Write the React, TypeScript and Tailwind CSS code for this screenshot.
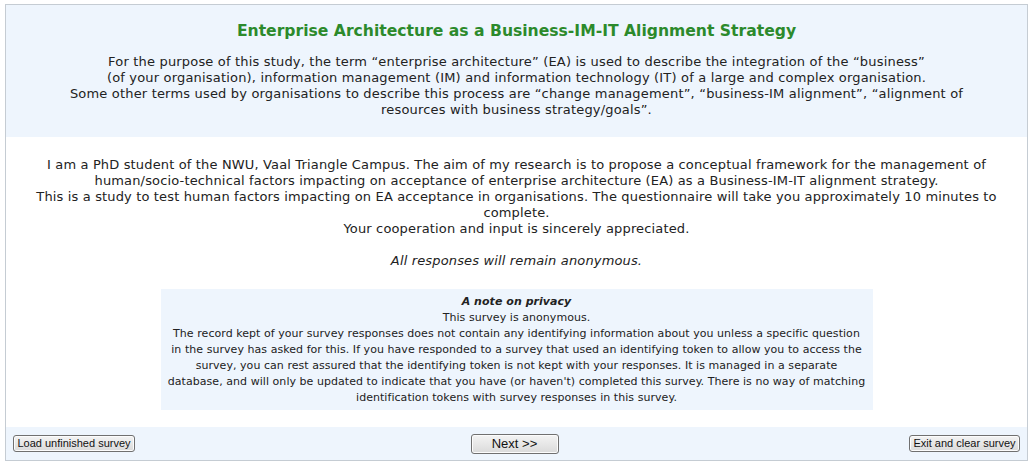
import React from 'react';

const btn =
  'rounded-[3px] border border-[#707070] bg-gradient-to-b from-[#f4f4f4] to-[#dadada] text-[#111] leading-none shadow-[inset_0_0_0_1px_#fcfcfc]';

const App: React.FC = () => {
  return (
    <div className="w-[1033px] h-[469px] bg-white pt-[4px] pl-[5px] font-['DejaVu_Sans',Verdana,sans-serif] text-[#222]">
      <div className="w-[1023px] h-[457px] border border-[#c5ccd3] flex flex-col">
        {/* Header */}
        <div className="h-[132px] bg-[#eef5fd] pt-[16px] text-center">
          <h1 className="text-[15.6px] leading-[20px] font-bold text-[#2c8a2c]">
            Enterprise Architecture as a Business-IM-IT Alignment Strategy
          </h1>
          <div className="mt-[13px] text-[13px] leading-[16px] tracking-[0.18px]">
            <p>For the purpose of this study, the term “enterprise architecture” (EA) is used to describe the integration of the “business”</p>
            <p>(of your organisation), information management (IM) and information technology (IT) of a large and complex organisation.</p>
            <p>Some other terms used by organisations to describe this process are “change management”, “business-IM alignment”, “alignment of</p>
            <p>resources with business strategy/goals”.</p>
          </div>
        </div>

        {/* Welcome text */}
        <div className="flex-1 bg-white pt-[20px] text-center">
          <div className="text-[13px] leading-[16px] tracking-[0.15px]">
            <p>I am a PhD student of the NWU, Vaal Triangle Campus. The aim of my research is to propose a conceptual framework for the management of</p>
            <p>human/socio-technical factors impacting on acceptance of enterprise architecture (EA) as a Business-IM-IT alignment strategy.</p>
            <p>This is a study to test human factors impacting on EA acceptance in organisations. The questionnaire will take you approximately 10 minutes to</p>
            <p>complete.</p>
            <p>Your cooperation and input is sincerely appreciated.</p>
            <p>&nbsp;</p>
            <p className="italic">All responses will remain anonymous.</p>
          </div>

          <div className="mx-auto mt-[20px] w-[712px] h-[121px] bg-[#eef5fd] pt-[5px] text-[11px] leading-[16px] tracking-[0.05px]">
            <p className="font-bold italic">A note on privacy</p>
            <p>This survey is anonymous.</p>
            <p>The record kept of your survey responses does not contain any identifying information about you unless a specific question</p>
            <p>in the survey has asked for this. If you have responded to a survey that used an identifying token to allow you to access the</p>
            <p>survey, you can rest assured that the identifying token is not kept with your responses. It is managed in a separate</p>
            <p>database, and will only be updated to indicate that you have (or haven't) completed this survey. There is no way of matching</p>
            <p>identification tokens with survey responses in this survey.</p>
          </div>
        </div>

        {/* Footer */}
        <div className="h-[33px] bg-[#eef5fd] grid grid-cols-[1fr_auto_1fr] items-center px-[7px] font-['Liberation_Sans',Arial,sans-serif]">
          <button className={`${btn} justify-self-start w-[122px] h-[17px] text-[11px]`}>
            Load unfinished survey
          </button>
          <button className={`${btn} mr-[4px] w-[88px] h-[20px] text-[13px]`}>
            Next &gt;&gt;
          </button>
          <button className={`${btn} justify-self-end w-[111px] h-[17px] text-[11px]`}>
            Exit and clear survey
          </button>
        </div>
      </div>
    </div>
  );
};

export default App;
